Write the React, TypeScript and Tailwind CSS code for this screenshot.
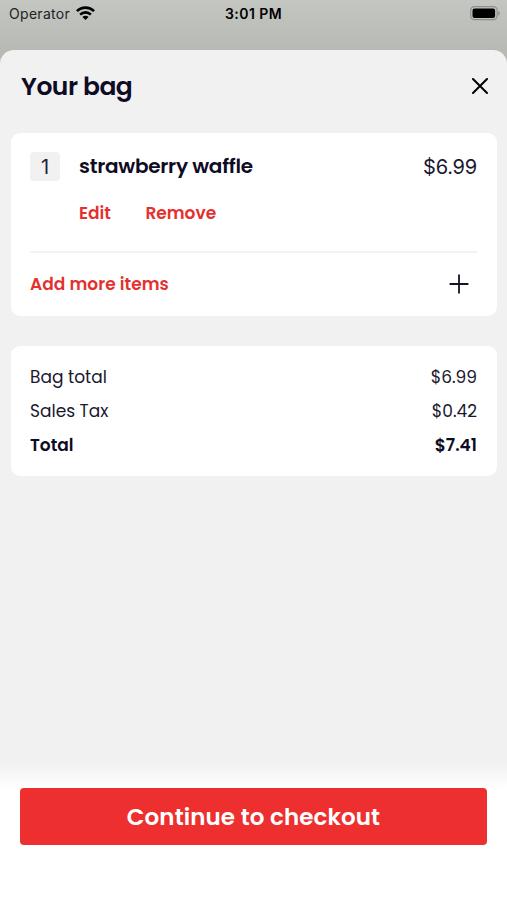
import React from "react";

const items = [{ qty: 1, name: "strawberry waffle", price: "$6.99" }];

function StatusBar() {
  return (
    <div className="flex h-[50px] items-start justify-between bg-gradient-to-b from-[#c4c6c2] to-[#b7b9b5] font-['Inter',sans-serif] text-black">
      <div className="flex w-[120px] items-center pl-[9px] pt-[4px]">
        <span className="w-[61px] text-[14px] leading-[20px] tracking-[0.3px] text-[#222]">Operator</span>
        <svg className="-mt-[2px] ml-[6px] h-[15px] w-[19px]" viewBox="0 0 18 14" fill="none">
          <path d="M.9 4.7a11.6 11.6 0 0 1 16.2 0" stroke="black" strokeWidth="2.5" />
          <path d="M3.9 8a7.3 7.3 0 0 1 10.2 0" stroke="black" strokeWidth="2.4" />
          <path d="M9 13.2 6.1 10.3a4.1 4.1 0 0 1 5.8 0Z" fill="black" />
        </svg>
      </div>
      <span className="pt-[4px] text-[14px] font-semibold leading-[20px] tracking-[0.45px]">3:01 PM</span>
      <div className="flex w-[120px] justify-end pr-[7px] pt-[6px]">
        <svg className="h-[15px] w-[30px]" viewBox="0 0 30 15" fill="none">
          <rect x="0.7" y="0.7" width="26.4" height="13" rx="3.6" stroke="#8d8f8c" strokeWidth="1.2" />
          <rect x="2.5" y="2.5" width="22.6" height="9.4" rx="2" fill="black" />
          <path d="M28.3 5v4.6c1-.4 1.6-1.3 1.6-2.3s-.6-1.9-1.6-2.3Z" fill="#8d8f8c" />
        </svg>
      </div>
    </div>
  );
}

function BagItem({ qty, name, price }: { qty: number; name: string; price: string }) {
  return (
    <div className="h-[120px] border-b-2 border-[#f3f3f3] pt-[19px]">
      <div className="flex items-center">
        <span className="flex h-[29px] w-[30px] items-center justify-center rounded-[4px] bg-[#f1f1f2] pt-px font-['Inter',sans-serif] text-[20px] text-[#25223a]">
          {qty}
        </span>
        <span className="-mt-px ml-[19px] flex-1 text-[20px] font-semibold leading-[28px] tracking-[-0.26px]">
          {name}
        </span>
        <span className="font-['Inter',sans-serif] text-[20px] leading-[28px] tracking-[-0.2px] text-[#1b182f]">{price}</span>
      </div>
      <div className="mt-[20px] flex gap-[34.5px] pl-[49px] text-[17px] font-semibold leading-[24px] text-[#e4312f]">
        <button>Edit</button>
        <button>Remove</button>
      </div>
    </div>
  );
}

export default function App() {
  return (
    <div className="flex h-[900px] w-[507px] flex-col overflow-hidden bg-[#b7b9b5] font-['Poppins','Inter',sans-serif] text-[#0e0b24]">
      <StatusBar />
      <div className="flex flex-1 flex-col rounded-t-[14px] bg-[#f1f1f1]">
        <div className="flex h-[83px] items-center justify-between pb-[10px] pl-[21px] pr-[19px]">
          <h1 className="text-[25px] font-semibold tracking-[-0.5px]">Your bag</h1>
          <button aria-label="Close" className="-mt-px">
            <svg className="h-[16px] w-[16px]" viewBox="0 0 16 16" fill="none">
              <path d="M1 1l14 14M15 1 1 15" stroke="black" strokeWidth="2" strokeLinecap="round" />
            </svg>
          </button>
        </div>

        <div className="mx-[10.5px] h-[183px] rounded-[9px] bg-white px-[19.5px]">
          {items.map((item) => (
            <BagItem key={item.name} {...item} />
          ))}
          <div className="flex h-[62px] items-center justify-between pr-[8px]">
            <span className="pt-px text-[17px] font-semibold tracking-[0.05px] text-[#e4312f]">Add more items</span>
            <svg className="h-[20px] w-[20px]" viewBox="0 0 20 20" fill="none">
              <path d="M10 .6v18.8M.6 10h18.8" stroke="#15122b" strokeWidth="1.8" />
            </svg>
          </div>
        </div>

        <div className="mx-[10.5px] mt-[30px] h-[130px] rounded-[9px] bg-white px-[19.5px] pt-[14px] text-[17px] leading-[34px]">
          <div className="flex justify-between text-[#1b182f]">
            <span>Bag total</span>
            <span>$6.99</span>
          </div>
          <div className="flex justify-between text-[#1b182f]">
            <span>Sales Tax</span>
            <span>$0.42</span>
          </div>
          <div className="flex justify-between font-semibold">
            <span>Total</span>
            <span>$7.41</span>
          </div>
        </div>

        <div className="mt-auto flex h-[137px] flex-col bg-white">
          <div className="h-[25px] shrink-0 bg-gradient-to-b from-[#f1f1f1] to-white"></div>
          <button className="mx-[20px] h-[57px] rounded-[4px] bg-[#ed302f] pt-px text-[23px] font-semibold tracking-[0.1px] text-white">
            Continue to checkout
          </button>
        </div>
      </div>
    </div>
  );
}
